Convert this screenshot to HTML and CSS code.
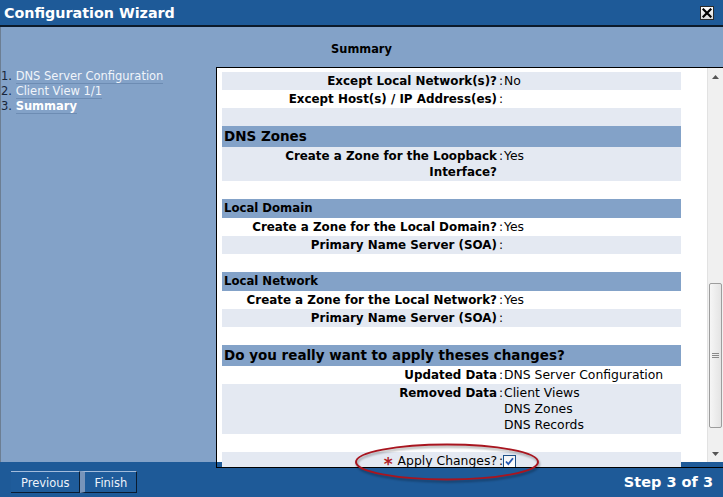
FILE: index.html
```html
<!DOCTYPE html>
<html>
<head>
<meta charset="utf-8">
<link rel="stylesheet" href="styles.css">
</head>
<body>
<div class="window">
  <header class="titlebar">
    <h1 class="title">Configuration Wizard</h1>
    <span class="close"><svg width="10" height="10" viewBox="0 0 10 10"><path d="M1.5 1.5 L8.5 8.5 M8.5 1.5 L1.5 8.5" stroke="#000" stroke-width="2.2" stroke-linecap="square"/></svg></span>
  </header>
  <main class="body">
    <h2 class="step-title">Summary</h2>
    <div class="columns">
      <ol class="steps">
        <li><span class="num">1.</span> <span class="lnk">DNS Server Configuration</span></li>
        <li><span class="num">2.</span> <span class="lnk">Client View 1/1</span></li>
        <li><span class="num">3.</span> <span class="lnk cur">Summary</span></li>
      </ol>
      <section class="panel">
        <div class="view">
          <div class="sum">
            <div class="row alt"><div class="lbl">Except Local Network(s)?</div><div class="col">:</div><div class="val">No</div></div>
            <div class="row"><div class="lbl">Except Host(s) / IP Address(es)</div><div class="col">:</div><div class="val"></div></div>
            <div class="row alt empty"></div>
            <div class="hd lg">DNS Zones</div>
            <div class="row alt"><div class="lbl">Create a Zone for the Loopback Interface?</div><div class="col">:</div><div class="val">Yes</div></div>
            <div class="row empty"></div>
            <div class="hd sm">Local Domain</div>
            <div class="row"><div class="lbl">Create a Zone for the Local Domain?</div><div class="col">:</div><div class="val">Yes</div></div>
            <div class="row alt"><div class="lbl">Primary Name Server (SOA)</div><div class="col">:</div><div class="val"></div></div>
            <div class="row empty"></div>
            <div class="hd sm">Local Network</div>
            <div class="row"><div class="lbl">Create a Zone for the Local Network?</div><div class="col">:</div><div class="val">Yes</div></div>
            <div class="row alt"><div class="lbl">Primary Name Server (SOA)</div><div class="col">:</div><div class="val"></div></div>
            <div class="row empty"></div>
            <div class="hd lg">Do you really want to apply theses changes?</div>
            <div class="row"><div class="lbl">Updated Data</div><div class="col">:</div><div class="val">DNS Server Configuration</div></div>
            <div class="row alt"><div class="lbl">Removed Data</div><div class="col">:</div><div class="val">Client Views<br>DNS Zones<br>DNS Records</div></div>
            <div class="row empty"></div>
            <div class="row alt"><div class="lbl plain"><span class="req">*</span> Apply Changes?</div><div class="col">:</div><div class="val"><span class="check"><svg width="11" height="11" viewBox="0 0 11 11"><path d="M2 5.5 L4.3 8 L9 2.2" fill="none" stroke="#2456b0" stroke-width="1.8"/></svg></span></div></div>
          </div>
        </div>
        <div class="vscroll">
          <div class="sb-btn"><svg width="7" height="4" viewBox="0 0 7 4"><path d="M0 4 L3.5 0 L7 4Z" fill="#555"/></svg></div>
          <div class="sb-track">
            <div class="sb-thumb"><svg width="7" height="6" viewBox="0 0 7 6"><path d="M0 0.5H7M0 2.5H7M0 4.5H7" stroke="#8a8a8a" stroke-width="1"/></svg></div>
          </div>
          <div class="sb-btn"><svg width="7" height="4" viewBox="0 0 7 4"><path d="M0 0 L3.5 4 L7 0Z" fill="#555"/></svg></div>
        </div>
      </section>
    </div>
  </main>
  <footer class="footer">
    <div class="btns">
      <span class="btn">Previous</span><span class="btn">Finish</span>
    </div>
    <div class="stepno">Step 3 of 3</div>
  </footer>
  <svg class="mark" width="196" height="46" viewBox="0 0 196 46"><ellipse cx="95" cy="22" rx="91" ry="17.5" fill="none" stroke="#a8151f" stroke-width="2"/></svg>
</div>
</body>
</html>
```
FILE: styles.css
```css
* { box-sizing: border-box; }
html, body { margin: 0; padding: 0; }
body {
  width: 723px;
  height: 497px;
  overflow: hidden;
  font-family: "DejaVu Sans", Verdana, sans-serif;
  color: #000;
}
.window {
  position: relative;
  width: 723px;
  height: 497px;
  display: flex;
  flex-direction: column;
}
.titlebar {
  height: 27px;
  flex: none;
  background: #1e5a98;
  border-bottom: 2px solid #0c1a2a;
  display: flex;
  align-items: center;
  justify-content: space-between;
  padding: 1px 9px 1px 4px;
}
.title {
  margin: 0;
  font-size: 14.3px;
  font-weight: bold;
  color: #fff;
  line-height: 20px;
}
.close {
  width: 14px;
  height: 14px;
  border: 1px solid #2b2b2b;
  background: linear-gradient(#ffffff, #d8d8d8);
  display: flex;
  align-items: center;
  justify-content: center;
}
.body {
  height: 435px;
  flex: none;
  background: #83a2c8;
  box-shadow: inset 1px 0 0 #6c7e93;
  display: flex;
  flex-direction: column;
}
.step-title {
  margin: 0;
  height: 40px;
  flex: none;
  padding-top: 14px;
  text-align: center;
  font-size: 11.4px;
  font-weight: bold;
  line-height: 16px;
}
.columns {
  display: flex;
  align-items: flex-start;
}
.steps {
  list-style: none;
  margin: 0;
  padding: 2px 0 0 1px;
  width: 216px;
  flex: none;
  font-size: 11.5px;
  line-height: 15px;
}
.num { color: #18263a; }
.lnk {
  color: #f0f4fa;
  border-bottom: 1px solid rgba(70, 100, 140, 0.35);
}
.lnk.cur { font-weight: bold; color: #fff; }
.panel {
  position: relative;
  z-index: 1;
  flex: 1;
  height: 401px;
  border: 1px solid #000;
  border-right: none;
  background: linear-gradient(#fff 0, #fff calc(100% - 5px), transparent calc(100% - 5px));
  display: flex;
}
.view {
  width: 490px;
  overflow: hidden;
  padding: 4px 0 0 5px;
}
.sum { width: 459px; }
.row {
  display: grid;
  grid-template-columns: 276px 6px 1fr;
  min-height: 18px;
  padding: 1px 0;
  line-height: 16px;
  background: #fff;
}
.row.alt { background: #e4e9f2; }
.lbl {
  text-align: right;
  font-weight: bold;
  font-size: 11.9px;
  padding-right: 1px;
}
.lbl.plain { font-weight: normal; font-size: 12.4px; }
.col { font-size: 12px; text-align: center; }
.val { font-size: 12.4px; }
.hd {
  background: #83a2c8;
  font-weight: bold;
  padding-left: 2px;
}
.hd.lg { height: 21px; font-size: 13.5px; line-height: 21px; }
.hd.sm { height: 19px; font-size: 11.7px; line-height: 19px; }
.req {
  color: #b01c24;
  font-weight: bold;
  font-size: 17px;
  line-height: 10px;
  position: relative;
  top: 5px;
  margin-right: 1px;
}
.check {
  display: inline-flex;
  align-items: center;
  justify-content: center;
  width: 13px;
  height: 13px;
  border: 1px solid #1d4f86;
  background: linear-gradient(#f4f4f4, #fff);
  vertical-align: -2px;
  margin-left: -1px;
}
.vscroll {
  width: 16px;
  height: 394px;
  margin-left: auto;
  display: flex;
  flex-direction: column;
  background: #f0f0f0;
  border-left: 1px solid #e2e2e2;
}
.sb-btn {
  height: 17px;
  flex: none;
  display: flex;
  align-items: center;
  justify-content: center;
}
.sb-track {
  flex: 1;
  padding-top: 198px;
}
.sb-thumb {
  height: 145px;
  margin: 0 1px;
  border: 1px solid #9d9d9d;
  border-radius: 2px;
  background: linear-gradient(90deg, #f6f6f6, #e4e4e4);
  display: flex;
  align-items: center;
  justify-content: center;
}
.footer {
  flex: 1;
  background: #1e5a98;
  display: flex;
  justify-content: space-between;
  align-items: flex-start;
  padding: 9px 10px 0 11px;
}
.btns { display: flex; }
.btn {
  display: block;
  height: 22px;
  padding: 1px 9px 0 10px;
  color: #eef3fa;
  font-size: 11.5px;
  line-height: 20px;
  background: #1f5c9b;
  border-top: 1px solid #a3bcdc;
  border-right: 1px solid #0b1c30;
  border-bottom: 1px solid #0b1c30;
}
.btn + .btn {
  border-left: 5px solid #7794ba;
  padding-left: 10px;
}
.stepno {
  color: #fff;
  font-weight: bold;
  font-size: 14.5px;
  line-height: 20px;
  padding-top: 1px;
}
.mark {
  position: absolute;
  z-index: 2;
  left: 352px;
  top: 440px;
  filter: drop-shadow(1px 2px 1px rgba(0, 0, 0, 0.35));
}
```
